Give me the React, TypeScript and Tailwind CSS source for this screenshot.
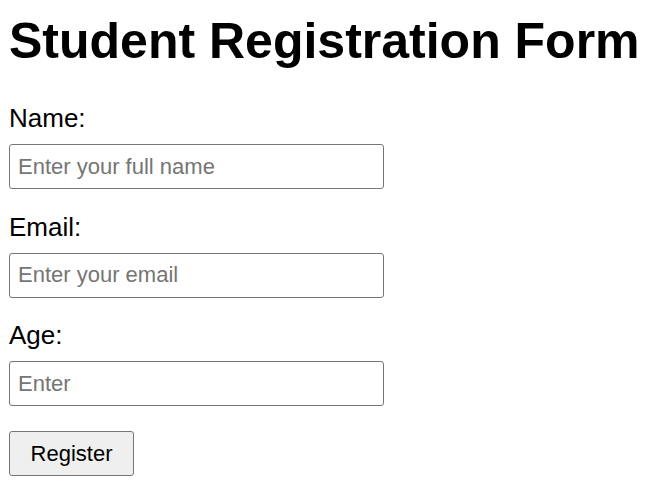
import React from "react";

export default function App() {
  const field = (label: string, placeholder: string, type: string) => (
    <div className="flex flex-col">
      <label className="block text-[26px] leading-[30px] text-black">{label}</label>
      <input
        type={type}
        placeholder={placeholder}
        className="mt-[11px] w-[375px] h-[45px] box-border border border-[#767676] rounded-[3px] px-[8px] text-[22px] text-black placeholder:text-[#757575] bg-white outline-none"
        style={{ fontFamily: '"Liberation Sans", Arial, sans-serif' }}
      />
    </div>
  );
  return (
    <div
      className="min-h-[497px] bg-white pl-[9px] pt-[13px] text-black"
      style={{ fontFamily: '"Liberation Sans", Arial, sans-serif' }}
    >
      <h1 className="text-[50px] leading-[57px] font-bold">Student Registration Form</h1>
      <form className="mt-[33px] flex flex-col gap-[22.5px]" onSubmit={(e) => e.preventDefault()}>
        {field("Name:", "Enter your full name", "text")}
        {field("Email:", "Enter your email", "email")}
        {field("Age:", "Enter", "number")}
        <div className="pt-[2px]">
          <button
            type="submit"
            className="w-[125px] h-[45px] box-border border border-[#767676] rounded-[3px] bg-[#efefef] text-[22px] text-black"
            style={{ fontFamily: '"Liberation Sans", Arial, sans-serif' }}
          >
            Register
          </button>
        </div>
      </form>
    </div>
  );
}
